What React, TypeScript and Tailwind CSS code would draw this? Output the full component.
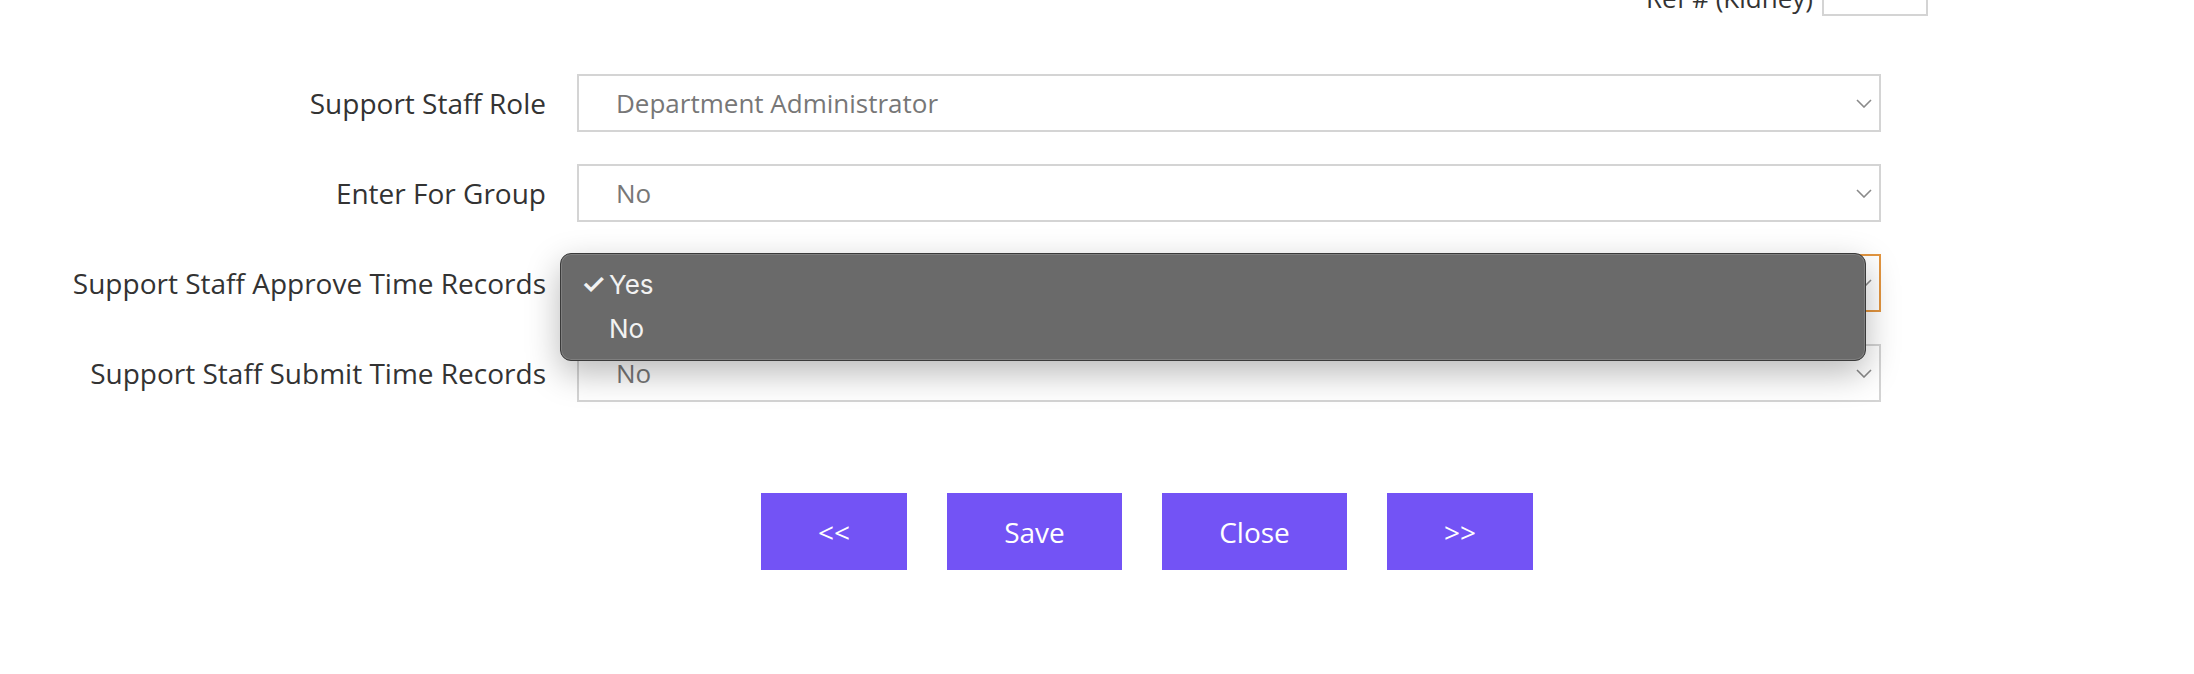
import React from "react";

const rows = [
  { label: "Support Staff Role", value: "Department Administrator" },
  { label: "Enter For Group", value: "No" },
  { label: "Support Staff Approve Time Records", value: "Yes", open: true },
  { label: "Support Staff Submit Time Records", value: "No" },
];

const buttons = [
  { text: "<<", w: "w-[146px]" },
  { text: "Save", w: "w-[175px]" },
  { text: "Close", w: "w-[185px]" },
  { text: ">>", w: "w-[146px]" },
];

function Chevron() {
  return (
    <svg width="16" height="9" viewBox="0 0 16 9" className="shrink-0">
      <path d="M1 1l7 7 7-7" fill="none" stroke="#8a8a8a" strokeWidth="1.6" />
    </svg>
  );
}

function OptionsPopup() {
  // the native option list shown over the focused select
  return (
    <div className="absolute left-[-17px] top-[-1px] z-10 h-[108px] w-[1306px] rounded-[11px] border border-[#3a3a3a] bg-[#6a6a6a] shadow-[0_12px_34px_rgba(0,0,0,0.28),inset_0_0_0_1px_rgba(255,255,255,0.14)] font-['Inter',sans-serif] text-[26px] text-[#f2f2f2]">
      <div className="flex flex-col pt-[8px]">
        <div className="flex h-[44px] items-center">
          <span className="w-[48px] pl-[20px] text-[28px] font-semibold">✓</span>
          <span>Yes</span>
        </div>
        <div className="flex h-[44px] items-center">
          <span className="w-[48px]" />
          <span>No</span>
        </div>
      </div>
    </div>
  );
}

export default function App() {
  return (
    <div className="min-h-[674px] overflow-hidden bg-white font-['Open_Sans',sans-serif] text-[28px] text-[#333]">
      {/* cut-off row above */}
      <div className="flex h-[16px] items-end justify-end gap-[9px] pr-[266px]">
        <span className="text-[26px] leading-9 whitespace-nowrap">Ref # (Kidney)</span>
        <div className="h-[58px] w-[106px] shrink-0 border-2 border-[#d4d4d4]" />
      </div>

      <div className="mt-[58px] flex flex-col gap-[32px]">
        {rows.map((row) => (
          <div key={row.label} className="flex items-center gap-[31px]">
            <div className="w-[546px] text-right whitespace-nowrap">{row.label}</div>
            <div className="relative">
              <div
                className={`flex h-[58px] w-[1304px] items-center justify-between border-2 pl-[37px] pr-[7px] text-[26px] ${
                  row.open ? "border-[#e3953f]" : "border-[#d4d4d4]"
                }`}
              >
                <span className={row.open ? "invisible" : "text-[#777]"}>{row.value}</span>
                <Chevron />
              </div>
              {row.open && <OptionsPopup />}
            </div>
          </div>
        ))}
      </div>

      <div className="mt-[91px] flex gap-[40px] pl-[761px]">
        {buttons.map((b) => (
          <button
            key={b.text}
            className={`h-[77px] ${b.w} bg-[#7353f5] text-[28px] text-white`}
          >
            {b.text}
          </button>
        ))}
      </div>
    </div>
  );
}
